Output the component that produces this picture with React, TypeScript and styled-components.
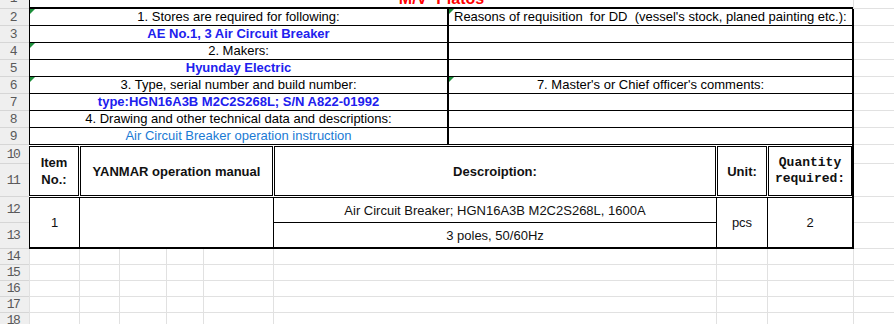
import React from "react";
import styled, { createGlobalStyle } from "styled-components";

// sheet geometry, in px
const ROW_HEIGHTS = [20, 17, 17, 17, 17, 17, 17, 17, 17, 19, 33, 26, 26, 16, 16, 16, 16, 16];
const COL_WIDTHS = [50, 40, 47, 37, 70, 443, 51, 86];

const GlobalStyle = createGlobalStyle`
  html, body {
    margin: 0;
    padding: 0;
    background: #fff;
    overflow: hidden;
  }
  body {
    font-family: "Liberation Sans", Arial, sans-serif;
  }
`;

const Sheet = styled.div`
  display: grid;
  grid-template-columns: 29px 1fr;
  grid-template-rows: ${ROW_HEIGHTS.map((h) => `${h}px`).join(" ")};
  width: 894px;
  margin-top: -11px;
`;

const RowHead = styled.div<{ $row: number }>`
  grid-column: 1;
  grid-row: ${({ $row }) => $row};
  box-sizing: border-box;
  background: #efefef;
  border-bottom: 1px solid #d6d6d6;
  display: flex;
  align-items: center;
  justify-content: center;
  padding-right: 3px;
  font: 13px "Liberation Mono", monospace;
  letter-spacing: -1.5px;
  color: #595959;
`;

const GridRow = styled.div<{ $row: number }>`
  grid-column: 2;
  grid-row: ${({ $row }) => $row};
  display: flex;
`;

const GridCell = styled.div<{ $w?: number }>`
  flex: ${({ $w }) => ($w ? `0 0 ${$w}px` : "1")};
  box-sizing: border-box;
  border-left: 1px solid #e1e1e1;
  border-bottom: 1px solid #e1e1e1;
`;

const Block = styled.div<{ $rows: string }>`
  grid-column: 2;
  grid-row: ${({ $rows }) => $rows};
  width: 825px;
  box-sizing: border-box;
  background: #fff;
  color: #000;
  font-size: 13px;
`;

const TitleBlock = styled(Block)`
  width: 824px;
  border-left: 1px solid #000;
  border-bottom: 2px solid #000;
  padding-top: 2px;
  text-align: center;
  white-space: pre;
  font-size: 16px;
  line-height: 16px;
  font-weight: bold;
  color: #ff0000;
`;

const FormBlock = styled(Block)`
  display: flex;
  border-left: 1px solid #000;
  border-right: 2px solid #000;
`;

const FormColumn = styled.div<{ $w: number; $divider?: boolean }>`
  width: ${({ $w }) => $w}px;
  box-sizing: border-box;
  border-left: ${({ $divider }) => ($divider ? "2px solid #000" : "none")};
  display: flex;
  flex-direction: column;
`;

type Tone = "plain" | "strong" | "link";

const toneColor: Record<Tone, string> = {
  plain: "#000",
  strong: "#2020ee",
  link: "#1a7ad4",
};

const FormCell = styled.div<{ $tone?: Tone; $align?: "left" | "center"; $flag?: boolean }>`
  position: relative;
  height: 17px;
  box-sizing: border-box;
  border-bottom: 1px solid #000;
  padding: 0 5px;
  line-height: 16px;
  white-space: pre;
  overflow: hidden;
  text-align: ${({ $align }) => $align ?? "center"};
  color: ${({ $tone }) => toneColor[$tone ?? "plain"]};
  font-weight: ${({ $tone }) => ($tone === "strong" ? "bold" : "normal")};

  &::before {
    content: "";
    display: ${({ $flag }) => ($flag ? "block" : "none")};
    position: absolute;
    top: 0;
    left: 0;
    border-top: 5px solid #1d8f3b;
    border-right: 5px solid transparent;
  }
`;

const HeadBlock = styled(Block)`
  display: flex;
  gap: 1px;
  padding: 1px 0;
  border-right: 2px solid #000;
`;

const HeadCell = styled.div<{ $w: number; $mono?: boolean }>`
  flex: 0 0 ${({ $w }) => $w}px;
  box-sizing: border-box;
  border: 1px solid #000;
  display: flex;
  align-items: center;
  justify-content: center;
  text-align: center;
  font-weight: bold;
  color: #111;
  font-family: ${({ $mono }) => ($mono ? `"Liberation Mono", monospace` : "inherit")};
  line-height: ${({ $mono }) => ($mono ? "16px" : "17px")};
`;

const DataBlock = styled(Block)`
  display: flex;
  border-style: solid;
  border-color: #000;
  border-width: 1px 2px 2px 1px;
`;

const DataCell = styled.div<{ $w: number }>`
  flex: 0 0 ${({ $w }) => $w}px;
  box-sizing: border-box;
  display: flex;
  flex-direction: column;
  align-items: stretch;
  justify-content: center;
  text-align: center;
  color: #111;

  & + & {
    border-left: 1px solid #000;
  }
`;

const DataLine = styled.div`
  flex: 1;
  display: flex;
  align-items: center;
  justify-content: center;

  & + & {
    border-top: 1px solid #000;
  }
`;

const leftRows: { text: string; tone: Tone; flag?: boolean }[] = [
  { text: "1. Stores are required for following:", tone: "plain", flag: true },
  { text: "AE No.1, 3 Air Circuit Breaker", tone: "strong" },
  { text: "2. Makers:", tone: "plain", flag: true },
  { text: "Hyunday Electric", tone: "strong" },
  { text: "3. Type, serial number and build number:", tone: "plain", flag: true },
  { text: "type:HGN16A3B M2C2S268L; S/N A822-01992", tone: "strong" },
  { text: "4. Drawing and other technical data and descriptions:", tone: "plain" },
  { text: "Air Circuit Breaker operation instruction", tone: "link" },
];

export default function App() {
  return (
    <>
      <GlobalStyle />
      <Sheet>
        {ROW_HEIGHTS.map((_, i) => (
          <RowHead key={`h${i}`} $row={i + 1}>
            {i + 1}
          </RowHead>
        ))}
        {ROW_HEIGHTS.map((_, i) => (
          <GridRow key={`g${i}`} $row={i + 1}>
            {COL_WIDTHS.map((w, j) => (
              <GridCell key={j} $w={w} />
            ))}
            <GridCell />
          </GridRow>
        ))}

        <TitleBlock $rows="1">M/V  Platos</TitleBlock>

        <FormBlock $rows="2 / 10">
          <FormColumn $w={417}>
            {leftRows.map((r, i) => (
              <FormCell key={i} $tone={r.tone} $flag={r.flag}>
                {r.text}
              </FormCell>
            ))}
          </FormColumn>
          <FormColumn $w={405} $divider>
            <FormCell $align="left" $flag>
              Reasons of requisition  for DD  (vessel's stock, planed painting etc.):
            </FormCell>
            <FormCell />
            <FormCell />
            <FormCell />
            <FormCell $flag>7. Master's or Chief officer's comments:</FormCell>
            <FormCell />
            <FormCell />
            <FormCell />
          </FormColumn>
        </FormBlock>

        <HeadBlock $rows="10 / 12">
          <HeadCell $w={50}>
            Item
            <br />
            No.:
          </HeadCell>
          <HeadCell $w={193}>YANMAR operation manual</HeadCell>
          <HeadCell $w={442}>Descroiption:</HeadCell>
          <HeadCell $w={50}>Unit:</HeadCell>
          <HeadCell $w={84} $mono>
            Quantity
            <br />
            required:
          </HeadCell>
        </HeadBlock>

        <DataBlock $rows="12 / 14">
          <DataCell $w={49}>1</DataCell>
          <DataCell $w={194} />
          <DataCell $w={443}>
            <DataLine>Air Circuit Breaker; HGN16A3B M2C2S268L, 1600A</DataLine>
            <DataLine>3 poles, 50/60Hz</DataLine>
          </DataCell>
          <DataCell $w={51}>pcs</DataCell>
          <DataCell $w={85}>2</DataCell>
        </DataBlock>
      </Sheet>
    </>
  );
}
